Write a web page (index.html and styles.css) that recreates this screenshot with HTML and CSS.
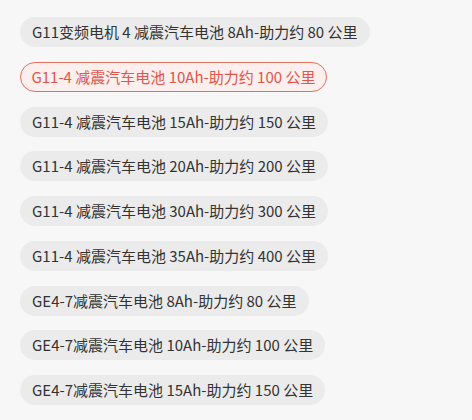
FILE: index.html
```html
<!DOCTYPE html>
<html lang="zh-CN">
<head>
<meta charset="utf-8">
<link rel="stylesheet" href="styles.css">
</head>
<body>
<div class="list">
  <div class="pill">G11变频电机 4 减震汽车电池 8Ah-助力约 80 公里</div>
  <div class="pill active">G11-4 减震汽车电池 10Ah-助力约 100 公里</div>
  <div class="pill">G11-4 减震汽车电池 15Ah-助力约 150 公里</div>
  <div class="pill">G11-4 减震汽车电池 20Ah-助力约 200 公里</div>
  <div class="pill">G11-4 减震汽车电池 30Ah-助力约 300 公里</div>
  <div class="pill">G11-4 减震汽车电池 35Ah-助力约 400 公里</div>
  <div class="pill">GE4-7减震汽车电池 8Ah-助力约 80 公里</div>
  <div class="pill">GE4-7减震汽车电池 10Ah-助力约 100 公里</div>
  <div class="pill">GE4-7减震汽车电池 15Ah-助力约 150 公里</div>
  <div class="pill">GE4-7减震汽车电池 20Ah-助力约 200 公里</div>
</div>
</body>
</html>
```
FILE: styles.css
```css
html, body {
  margin: 0;
  padding: 0;
  background: #f7f7f7;
}
body {
  width: 472px;
  height: 420px;
  overflow: hidden;
  font-family: "Noto Sans CJK SC", "Noto Sans", sans-serif;
}
.list {
  display: flex;
  flex-direction: column;
  align-items: flex-start;
  gap: 14.75px;
  padding: 17px 0 0 20px;
}
.pill {
  height: 30px;
  line-height: 30px;
  padding: 0 12px;
  border-radius: 15px;
  background: #ebebeb;
  color: #333333;
  font-size: 15px;
  font-weight: 400;
  white-space: nowrap;
  box-sizing: border-box;
}
.pill.active {
  background: #fcefed;
  color: #e0564a;
  border: 1.6px solid #e2705f;
  line-height: 27px;
  padding: 0 10.4px;
}
```
